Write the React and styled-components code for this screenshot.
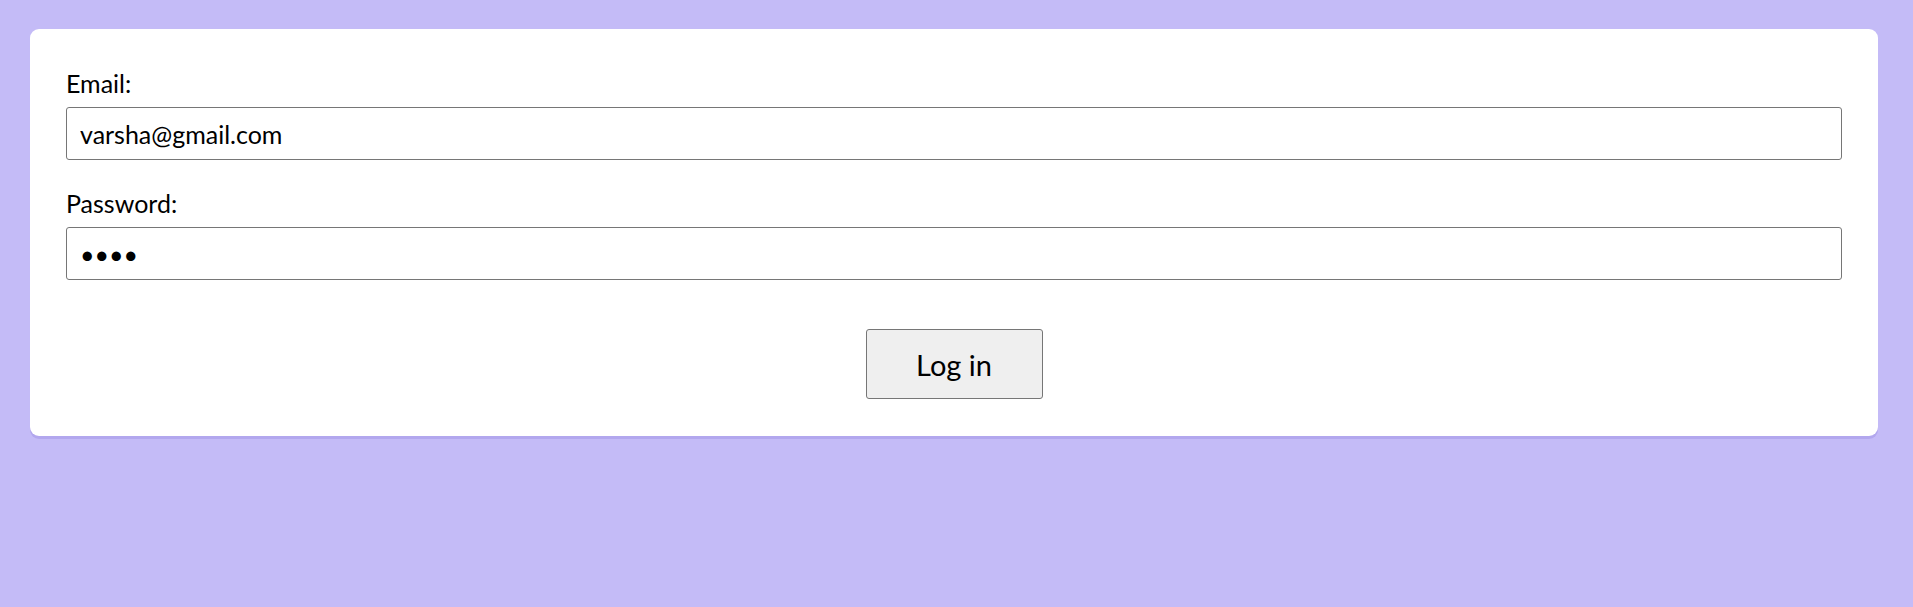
import React from "react";
import styled, { createGlobalStyle } from "styled-components";

const Global = createGlobalStyle`
  html, body { margin: 0; padding: 0; background: #c4bbf7; }
  body { font-family: Lato, "Noto Sans", sans-serif; color: #000; }
  * { box-sizing: border-box; }
`;

const Page = styled.div`
  min-height: 607px;
  padding: 29px 35px 0 30px;
`;

const Card = styled.form`
  background: #fff;
  border-radius: 9px;
  box-shadow: 0 3px 0 #b2a7ee;
  padding: 39px 36px 37px 36px;
  display: flex;
  flex-direction: column;
`;

const Field = styled.div`
  display: flex;
  flex-direction: column;
  margin-bottom: ${(p) => (p.$last ? "49px" : "28px")};
`;

const Label = styled.label`
  font-size: 25px;
  line-height: 30px;
  margin-bottom: 9px;
`;

const Input = styled.input`
  height: 53px;
  width: 100%;
  border: 1px solid #767676;
  border-radius: 3px;
  padding: 0 13px;
  font-family: Lato, "Noto Sans", sans-serif;
  font-size: 25px;
  color: #000;
  outline: none;
  background: #fff;
`;

const Actions = styled.div`
  display: flex;
  justify-content: center;
`;

const Button = styled.button`
  width: 177px;
  height: 70px;
  background: #efefef;
  border: 1px solid #767676;
  border-radius: 3px;
  font-family: Lato, "Noto Sans", sans-serif;
  font-size: 29px;
  color: #000;
  cursor: pointer;
`;

export default function App() {
  return (
    <>
      <Global />
      <Page>
        <Card onSubmit={(e) => e.preventDefault()}>
          <Field>
            <Label htmlFor="email">Email:</Label>
            <Input id="email" type="email" defaultValue="varsha@gmail.com" />
          </Field>
          <Field $last>
            <Label htmlFor="pw">Password:</Label>
            <Input id="pw" type="password" defaultValue="abcd" />
          </Field>
          <Actions>
            <Button type="submit">Log in</Button>
          </Actions>
        </Card>
      </Page>
    </>
  );
}
